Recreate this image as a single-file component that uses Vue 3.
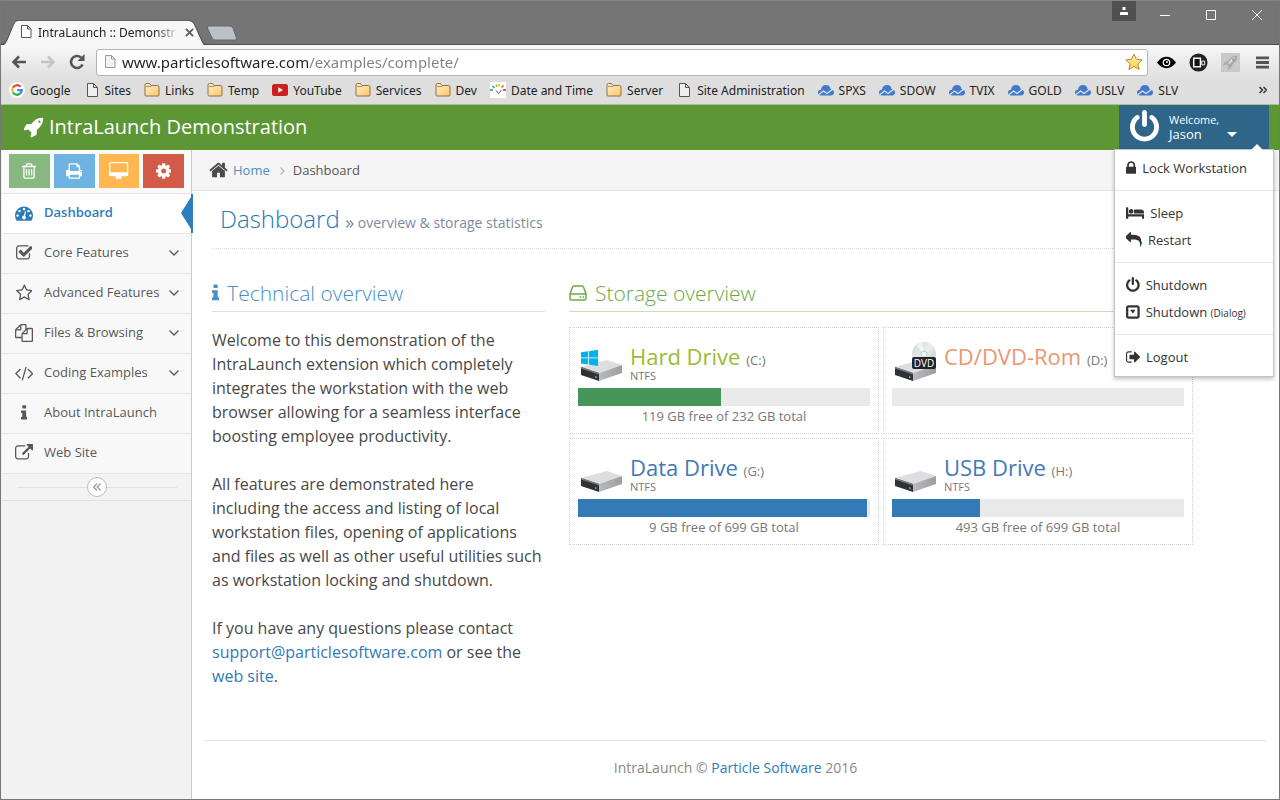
<script setup>
import { ref } from 'vue'

const url = ref('www.particlesoftware.com/examples/complete/')

const bookmarks = [
  { label: 'Google', icon: 'google' },
  { label: 'Sites', icon: 'page' },
  { label: 'Links', icon: 'folder' },
  { label: 'Temp', icon: 'folder' },
  { label: 'YouTube', icon: 'youtube' },
  { label: 'Services', icon: 'folder' },
  { label: 'Dev', icon: 'folder' },
  { label: 'Date and Time', icon: 'date' },
  { label: 'Server', icon: 'folder' },
  { label: 'Site Administration', icon: 'page' },
  { label: 'SPXS', icon: 'cloud' },
  { label: 'SDOW', icon: 'cloud' },
  { label: 'TVIX', icon: 'cloud' },
  { label: 'GOLD', icon: 'cloud' },
  { label: 'USLV', icon: 'cloud' },
  { label: 'SLV', icon: 'cloud' },
]

const icons = {
  trash: { box: '192 0 1408 1792', d: 'M704 736v576q0 14-9 23t-23 9h-64q-14 0-23-9t-9-23v-576q0-14 9-23t23-9h64q14 0 23 9t9 23zm256 0v576q0 14-9 23t-23 9h-64q-14 0-23-9t-9-23v-576q0-14 9-23t23-9h64q14 0 23 9t9 23zm256 0v576q0 14-9 23t-23 9h-64q-14 0-23-9t-9-23v-576q0-14 9-23t23-9h64q14 0 23 9t9 23zm128 724v-948h-896v948q0 22 7 40.5t14.5 27 10.5 8.5h832q3 0 10.5-8.5t14.5-27 7-40.5zm-672-1076h448l-48-117q-7-9-17-11h-317q-10 2-17 11zm928 32v64q0 14-9 23t-23 9h-96v948q0 83-47 143.5t-113 60.5h-832q-66 0-113-58.5t-47-141.5v-952h-96q-14 0-23-9t-9-23v-64q0-14 9-23t23-9h309l70-167q15-37 54-63t79-26h320q40 0 79 26t54 63l70 167h309q14 0 23 9t9 23z' },
  print: { box: '64 0 1664 1792', d: 'M448 1536h896v-256h-896v256zm0-640h896v-384h-160q-40 0-68-28t-28-68v-160h-640v640zm1152 64q0-26-19-45t-45-19-45 19-19 45 19 45 45 19 45-19 19-45zm128 0v416q0 13-9.5 22.5t-22.5 9.5h-224v160q0 40-28 68t-68 28h-960q-40 0-68-28t-28-68v-160h-224q-13 0-22.5-9.5t-9.5-22.5v-416q0-79 56.5-135.5t135.5-56.5h64v-544q0-40 28-68t68-28h672q40 0 88 20t76 48l152 152q28 28 48 76t20 88v256h64q79 0 135.5 56.5t56.5 135.5z' },
  desktop: { box: '-64 0 1920 1792', d: 'M1728 992v-832q0-13-9.5-22.5t-22.5-9.5h-1600q-13 0-22.5 9.5t-9.5 22.5v832q0 13 9.5 22.5t22.5 9.5h1600q13 0 22.5-9.5t9.5-22.5zm128-832v1088q0 66-47 113t-113 47h-544q0 37 16 77.5t32 71 16 43.5q0 26-19 45t-45 19h-512q-26 0-45-19t-19-45q0-14 16-44t32-70 16-78h-544q-66 0-113-47t-47-113v-1088q0-66 47-113t113-47h1600q66 0 113 47t47 113z' },
  cog: { box: '128 0 1536 1792', d: 'M1152 896q0-106-75-181t-181-75-181 75-75 181 75 181 181 75 181-75 75-181zm512-109v222q0 12-8 23t-20 13l-185 28q-19 54-39 91 35 50 107 138 10 12 10 25t-9 23q-27 37-99 108t-94 71q-12 0-26-9l-138-108q-44 23-91 38-16 136-29 186-7 28-36 28h-222q-14 0-24.5-8.5t-11.5-21.5l-28-184q-49-16-90-37l-141 107q-10 9-25 9-14 0-25-11-126-114-165-168-7-10-7-23 0-12 8-23 15-21 51-66.5t54-70.5q-27-50-41-99l-183-27q-13-2-21-12.5t-8-23.5v-222q0-12 8-23t19-13l186-28q14-46 39-92-40-57-107-138-10-12-10-24 0-10 9-23 26-36 98.5-107.5t94.5-71.5q13 0 26 10l138 107q44-23 91-38 16-136 29-186 7-28 36-28h222q14 0 24.5 8.5t11.5 21.5l28 184q49 16 90 37l142-107q9-9 24-9 13 0 25 10 129 119 165 170 7 8 7 22 0 12-8 23-15 21-51 66.5t-54 70.5q26 50 41 98l183 28q13 2 21 12.5t8 23.5z' },
  gauge: { box: '0 0 1792 1792', d: 'M384 1152q0-53-37.5-90.5t-90.5-37.5-90.5 37.5-37.5 90.5 37.5 90.5 90.5 37.5 90.5-37.5 37.5-90.5zm192-448q0-53-37.5-90.5t-90.5-37.5-90.5 37.5-37.5 90.5 37.5 90.5 90.5 37.5 90.5-37.5 37.5-90.5zm428 481l101-382q6-26-7.5-48.5t-38.5-29.5-48 6.5-30 39.5l-101 382q-60 5-107 43.5t-63 98.5q-20 77 20 146t117 89 146-20 89-117q16-60-6-117t-72-91zm660-33q0-53-37.5-90.5t-90.5-37.5-90.5 37.5-37.5 90.5 37.5 90.5 90.5 37.5 90.5-37.5 37.5-90.5zm-640-640q0-53-37.5-90.5t-90.5-37.5-90.5 37.5-37.5 90.5 37.5 90.5 90.5 37.5 90.5-37.5 37.5-90.5zm448 192q0-53-37.5-90.5t-90.5-37.5-90.5 37.5-37.5 90.5 37.5 90.5 90.5 37.5 90.5-37.5 37.5-90.5zm320 448q0 261-141 483-19 29-54 29h-1402q-35 0-54-29-141-221-141-483 0-182 71-348t191-286 286-191 348-71 348 71 286 191 191 286 71 348z' },
  check: { box: '64 0 1664 1792', d: 'M1472 930v318q0 119-84.5 203.5t-203.5 84.5h-832q-119 0-203.5-84.5t-84.5-203.5v-832q0-119 84.5-203.5t203.5-84.5h832q63 0 117 25 15 7 18 23 3 17-9 29l-49 49q-10 10-23 10-3 0-9-2-23-6-45-6h-832q-66 0-113 47t-47 113v832q0 66 47 113t113 47h832q66 0 113-47t47-113v-254q0-13 9-22l64-64q10-10 23-10 6 0 12 3 20 8 20 29zm231-489l-814 814q-24 24-57 24t-57-24l-430-430q-24-24-24-57t24-57l110-110q24-24 57-24t57 24l263 263 647-647q24-24 57-24t57 24l110 110q24 24 24 57t-24 57z' },
  star: { box: '64 0 1664 1792', d: 'M1201 1004l306-297-422-62-189-382-189 382-422 62 306 297-73 421 378-199 377 199zm527-357q0 22-26 48l-363 354 86 500q1 7 1 20 0 50-41 50-19 0-40-12l-449-236-449 236q-22 12-40 12-21 0-31.5-14.5t-10.5-35.5q0-6 2-20l86-500-364-354q-25-27-25-48 0-37 56-46l502-73 225-455q19-41 49-41t49 41l225 455 502 73q56 9 56 46z' },
  files: { box: '0 0 1792 1792', d: 'M1696 384q40 0 68 28t28 68v1216q0 40-28 68t-68 28h-960q-40 0-68-28t-28-68v-288h-544q-40 0-68-28t-28-68v-672q0-40 20-88t48-76l408-408q28-28 76-48t88-20h416q40 0 68 28t28 68v328q68-40 128-40h416zm-544 213l-299 299h299v-299zm-640-384l-299 299h299v-299zm196 647l316-316v-416h-384v416q0 40-28 68t-68 28h-416v640h512v-256q0-40 20-88t48-76zm956 804v-1152h-384v416q0 40-28 68t-68 28h-416v640h896z' },
  code: { box: '-20 0 1832 1792', d: 'M553 1399l-50 50q-10 10-23 10t-23-10l-466-466q-10-10-10-23t10-23l466-466q10-10 23-10t23 10l50 50q10 10 10 23t-10 23l-393 393 393 393q10 10 10 23t-10 23zm591-1067l-373 1291q-4 13-15.5 19.5t-23.5 2.5l-62-17q-13-4-19.5-15.5t-2.5-24.5l373-1291q4-13 15.5-19.5t23.5-2.5l62 17q13 4 19.5 15.5t2.5 24.5zm657 651l-466 466q-10 10-23 10t-23-10l-50-50q-10-10-10-23t10-23l393-393-393-393q-10-10-10-23t10-23l50-50q10-10 23-10t23 10l466 466q10 10 10 23t-10 23z' },
  info: { box: '576 0 640 1792', d: 'M1216 1344v128q0 26-19 45t-45 19h-512q-26 0-45-19t-19-45v-128q0-26 19-45t45-19h64v-384h-64q-26 0-45-19t-19-45v-128q0-26 19-45t45-19h384q26 0 45 19t19 45v576h64q26 0 45 19t19 45zm-128-1152v192q0 26-19 45t-45 19h-256q-26 0-45-19t-19-45v-192q0-26 19-45t45-19h256q26 0 45 19t19 45z' },
  external: { box: '0 0 1792 1792', d: 'M1408 928v320q0 119-84.5 203.5t-203.5 84.5h-832q-119 0-203.5-84.5t-84.5-203.5v-832q0-119 84.5-203.5t203.5-84.5h704q14 0 23 9t9 23v64q0 14-9 23t-23 9h-704q-66 0-113 47t-47 113v832q0 66 47 113t113 47h832q66 0 113-47t47-113v-320q0-14 9-23t23-9h64q14 0 23 9t9 23zm384-864v512q0 26-19 45t-45 19-45-19l-176-176-652 652q-10 10-23 10t-23-10l-114-114q-10-10-10-23t10-23l652-652-176-176q-19-19-19-45t19-45 45-19h512q26 0 45 19t19 45z' },
  rocket: { box: '64 0 1664 1792', d: 'M1440 448q0-40-28-68t-68-28-68 28-28 68 28 68 68 28 68-28 28-68zm224-288q0 249-75.5 430.5t-253.5 360.5q-81 80-195 176l-20 379q-2 16-16 26l-384 224q-7 4-16 4-12 0-23-9l-64-64q-13-14-8-32l85-276-281-281-276 85q-3 1-9 1-14 0-23-9l-64-64q-17-19-5-39l224-384q10-14 26-16l379-20q96-114 176-195 188-187 358-258t431-71q14 0 24 9.5t10 22.5z' },
  home: { box: '64 0 1664 1792', d: 'M1472 992v480q0 26-19 45t-45 19h-384v-384h-256v384h-384q-26 0-45-19t-19-45v-480q0-1 .5-3t.5-3l575-474 575 474q1 2 1 6zm223-69l-62 74q-8 9-21 11h-3q-13 0-21-7l-692-577-692 577q-12 8-24 7-13-2-21-11l-62-74q-8-10-7-23.5t11-21.5l719-599q32-26 76-26t76 26l244 204v-195q0-14 9-23t23-9h192q14 0 23 9t9 23v408l219 182q10 8 11 21.5t-7 23.5z' },
  power: { box: '128 0 1536 1792', d: 'M1664 896q0 156-61 298t-164 245-245 164-298 61-298-61-245-164-164-245-61-298q0-182 80.5-343t226.5-270q43-32 95.5-25t83.5 50q32 42 24.5 94.5t-49.5 84.5q-98 74-151.5 181t-53.5 228q0 104 40.5 198.5t109.5 163.5 163.5 109.5 198.5 40.5 198.5-40.5 163.5-109.5 109.5-163.5 40.5-198.5q0-121-53.5-228t-151.5-181q-42-32-49.5-84.5t24.5-94.5q31-43 84-50t95 25q146 109 226.5 270t80.5 343zm-640-768v640q0 52-38 90t-90 38-90-38-38-90v-640q0-52 38-90t90-38 90 38 38 90z' },
  lock: { box: '320 0 1152 1792', d: 'M640 768h512v-192q0-106-75-181t-181-75-181 75-75 181v192zm832 96v576q0 40-28 68t-68 28h-960q-40 0-68-28t-28-68v-576q0-40 28-68t68-28h32v-192q0-184 132-316t316-132 316 132 132 316v192h32q40 0 68 28t28 68z' },
  bed: { box: '0 0 2048 1792', d: 'M256 1024h1728q26 0 45 19t19 45v448h-256v-256h-1536v256h-256v-1216q0-26 19-45t45-19h128q26 0 45 19t19 45v704zm576-320q0 106-75 181t-181 75-181-75-75-181 75-181 181-75 181 75 75 181zm1216 256v-64q0-159-112.5-271.5t-271.5-112.5h-704q-26 0-45 19t-19 45v384h1152z' },
  reply: { box: '0 0 1792 1792', d: 'M1792 1120q0 166-127 451-3 7-10.5 24t-13.5 30-13 22q-12 17-28 17-15 0-23.5-10t-8.5-25q0-9 2.5-26.5t2.5-23.5q5-68 5-123 0-112-19.5-200.5t-54-153.5-89-112.5-119-78.5-149.5-49.5-174.5-24.5-200.5-7.5h-224v256q0 26-19 45t-45 19-45-19l-512-512q-19-19-19-45t19-45l512-512q19-19 45-19t45 19 19 45v256h224q713 0 875 403 53 134 53 333z' },
  dialog: { box: '128 0 1536 1792', d: 'M1145 676q17 32-4 61l-192 258q-20 29-53 29t-53-29l-192-258q-21-29-4-61 17-36 57-36h384q40 0 57 36zm263 700v-960q0-14-9-23t-23-9h-960q-14 0-23 9t-9 23v960q0 14 9 23t23 9h960q14 0 23-9t9-23zm256-960v960q0 119-84.5 203.5t-203.5 84.5h-960q-119 0-203.5-84.5t-84.5-203.5v-960q0-119 84.5-203.5t203.5-84.5h960q119 0 203.5 84.5t84.5 203.5z' },
  logout: { box: '64 0 1568 1792', d: 'M704 1440q0 4 1 20t.5 26.5-3 23.5-10 19.5-20.5 6.5h-320q-119 0-203.5-84.5t-84.5-203.5v-704q0-119 84.5-203.5t203.5-84.5h320q13 0 22.5 9.5t9.5 22.5q0 4 1 20t.5 26.5-3 23.5-10 19.5-20.5 6.5h-320q-66 0-113 47t-47 113v704q0 66 47 113t113 47h312l11.5 1 11.5 3 8 5.5 7 9 2 13.5zm928-544q0 26-19 45l-544 544q-19 19-45 19t-45-19-19-45v-288h-448q-26 0-45-19t-19-45v-384q0-26 19-45t45-19h448v-288q0-26 19-45t45-19 45 19l544 544q19 19 19 45z' },
}

const shortcuts = [
  { name: 'Trash', icon: 'trash', tone: 'green' },
  { name: 'Print', icon: 'print', tone: 'blue' },
  { name: 'Desktop', icon: 'desktop', tone: 'orange' },
  { name: 'Settings', icon: 'cog', tone: 'red' },
]

const nav = [
  { label: 'Dashboard', icon: 'gauge', active: true },
  { label: 'Core Features', icon: 'check', sub: true },
  { label: 'Advanced Features', icon: 'star', sub: true },
  { label: 'Files & Browsing', icon: 'files', sub: true },
  { label: 'Coding Examples', icon: 'code', sub: true },
  { label: 'About IntraLaunch', icon: 'info' },
  { label: 'Web Site', icon: 'external' },
]

const menuGroups = [
  [{ label: 'Lock Workstation', icon: 'lock' }],
  [{ label: 'Sleep', icon: 'bed' }, { label: 'Restart', icon: 'reply' }],
  [{ label: 'Shutdown', icon: 'power' }, { label: 'Shutdown', note: '(Dialog)', icon: 'dialog' }],
  [{ label: 'Logout', icon: 'logout' }],
]

const drives = [
  { name: 'Hard Drive', letter: '(C:)', fs: 'NTFS', used: 49, text: '119 GB free of 232 GB total', tone: 'lime', badge: 'windows' },
  { name: 'CD/DVD-Rom', letter: '(D:)', fs: '', used: 0, text: '', tone: 'coral', badge: 'dvd' },
  { name: 'Data Drive', letter: '(G:)', fs: 'NTFS', used: 99, text: '9 GB free of 699 GB total', tone: 'azure', badge: '' },
  { name: 'USB Drive', letter: '(H:)', fs: 'NTFS', used: 30, text: '493 GB free of 699 GB total', tone: 'azure', badge: '' },
]
</script>

<template>
  <div class="window">
    <svg class="defs" width="0" height="0" aria-hidden="true">
      <defs>
        <linearGradient id="folderFill" x1="0" y1="0" x2="1" y2="1">
          <stop offset="0" stop-color="#fff0cd" />
          <stop offset="1" stop-color="#f9c66c" />
        </linearGradient>
        <linearGradient id="starFill" x1="0" y1="0" x2="0" y2="1">
          <stop offset="0" stop-color="#fff3b0" />
          <stop offset="1" stop-color="#fbd03f" />
        </linearGradient>
        <linearGradient id="driveSide" x1="0" y1="0" x2="1" y2="0">
          <stop offset="0" stop-color="#b9babd" />
          <stop offset="1" stop-color="#9d9ea1" />
        </linearGradient>
        <linearGradient id="discFill" x1="0" y1="0" x2="1" y2="1">
          <stop offset="0" stop-color="#c9d8d4" />
          <stop offset="0.5" stop-color="#e9eeec" />
          <stop offset="1" stop-color="#b7c4c1" />
        </linearGradient>
      </defs>
    </svg>

    <div class="titlebar">
      <div class="tab">
        <svg class="tab-shape" viewBox="0 0 208 26" preserveAspectRatio="none" aria-hidden="true">
          <path d="M0 26C5 25 5 23 7 19L13 4Q14 1 18 1H191Q195 1 197 4L204 20Q206 25 208 26Z" fill="#f7f7f7" />
          <path d="M0 24C5 24 5 22 7 18L13 4Q14 0 18 0H191Q195 0 197 4L204 19Q206 24 208 24" fill="none" stroke="#4d4d4d" />
        </svg>
        <svg class="page-icon" viewBox="0 0 12 16" aria-hidden="true"><path d="M1.500 1.500h6l3.500 3.500v8.500h-9.500zM7.500 1.500V5H11" fill="#fff" stroke="#555" /></svg>
        <span class="tab-title">IntraLaunch :: Demonstr</span>
        <button class="tab-close" aria-label="Close tab">
          <svg viewBox="0 0 10 10"><path d="M1 1L9 9M9 1L1 9" stroke="#5a5a5a" stroke-width="2" /></svg>
        </button>
      </div>
      <button class="new-tab" aria-label="New tab">
        <svg viewBox="0 0 32 16"><path d="M3 1H24Q26 1 27 3L30.500 13Q31 15 29 15H9Q7 15 6 13L1.500 3Q1 1 3 1Z" fill="#bcc1c9" stroke="#686868" /></svg>
      </button>
      <div class="window-controls">
        <button class="profile" aria-label="Profile"><svg viewBox="0 0 8 8"><path d="M2.500 0h3v3h-3zM0 8V6q0-1 1-1h6q1 0 1 1v2z" fill="#fff" /></svg></button>
        <button aria-label="Minimize"><svg viewBox="0 0 10 10"><path d="M0 5.500H10" stroke="#fff" /></svg></button>
        <button aria-label="Maximize"><svg viewBox="0 0 10 10"><path d="M.5.5h9v9h-9z" fill="none" stroke="#fff" /></svg></button>
        <button aria-label="Close"><svg viewBox="0 0 10 10"><path d="M0 0L10 10M10 0L0 10" stroke="#fff" /></svg></button>
      </div>
    </div>

    <div class="chrome">
      <div class="toolbar">
        <button class="tool" aria-label="Back"><svg viewBox="0 0 16 16"><path d="M15 8H3M8 2.500L2.500 8L8 13.500" fill="none" stroke="#555" stroke-width="2.600" /></svg></button>
        <button class="tool" aria-label="Forward"><svg viewBox="0 0 16 16"><path d="M1 8H13M8 2.500L13.500 8L8 13.500" fill="none" stroke="#c4c4c4" stroke-width="2.600" /></svg></button>
        <button class="tool" aria-label="Reload"><svg viewBox="0 0 16 16"><path d="M13.500 10.500A6 6 0 1 1 12 3.500" fill="none" stroke="#555" stroke-width="2.600" /><path d="M15.500 0V7H8.500Z" fill="#555" /></svg></button>
        <label class="address">
          <svg class="page-icon" viewBox="0 0 12 16" aria-hidden="true"><path d="M1.500 1.500h6l3.500 3.500v8.500h-9.500zM7.500 1.500V5H11" fill="#f3f3f3" stroke="#999" /></svg>
          <input v-model="url" type="text" aria-label="Address" />
          <svg class="fav" viewBox="0 0 18 18" aria-hidden="true"><path d="M9 1l2.400 5.300 5.800.6-4.300 3.900 1.200 5.700L9 13.600l-5.100 2.900 1.200-5.700L.8 6.900l5.800-.6z" fill="url(#starFill)" stroke="#c08a3c" stroke-linejoin="round" /></svg>
        </label>
        <button class="tool" aria-label="Viewer"><svg viewBox="0 0 20 20"><path d="M0 10Q4.500 4 10 4T20 10Q15.500 16 10 16T0 10Z" fill="#000" /><circle cx="10" cy="10" r="4" fill="#fff" /><circle cx="10" cy="10" r="2.700" fill="#000" /><circle cx="10.500" cy="9.500" r="1" fill="#fff" /></svg></button>
        <button class="tool" aria-label="Recorder"><svg viewBox="0 0 20 20"><circle cx="10" cy="10" r="9.500" fill="#222" /><rect x="5" y="5.500" width="7" height="9" fill="#111" stroke="#fff" stroke-width="1.500" /><path d="M13.500 8.500h3v4h-3z" fill="none" stroke="#fff" /></svg></button>
        <button class="tool" aria-label="IntraLaunch"><svg viewBox="0 0 20 20"><rect width="20" height="20" fill="#c9c9c9" /><path d="M17 3Q11 3 8 8L4 10 2 13 6 12 8 14 7 18 10 16 12 12Q17 9 17 3Z" fill="#a9a9a9" /><path d="M15 4Q10 6 7 12Q13 10 15 4Z" fill="#dedede" /><circle cx="13" cy="7" r="1.300" fill="#999" /></svg></button>
        <button class="tool burger" aria-label="Menu"><svg viewBox="0 0 14 14"><path d="M0 2H14M0 7H14M0 12H14" stroke="#555" stroke-width="3" /></svg></button>
      </div>
      <nav class="bookmarks" aria-label="Bookmarks">
        <a v-for="b in bookmarks" :key="b.label" href="#">
          <svg v-if="b.icon === 'google'" viewBox="0 0 16 16"><circle cx="8" cy="8" r="8" fill="#fff" /><path d="M11.500 4.700A4.800 4.800 0 0 0 3.800 5.700" fill="none" stroke="#ea4335" stroke-width="2.200" /><path d="M3.800 5.700A4.800 4.800 0 0 0 3.900 10.500" fill="none" stroke="#fbbc05" stroke-width="2.200" /><path d="M3.900 10.500A4.800 4.800 0 0 0 11 11.700" fill="none" stroke="#34a853" stroke-width="2.200" /><path d="M11 11.700A4.800 4.800 0 0 0 12.800 8.100H8.200" fill="none" stroke="#4285f4" stroke-width="2.200" /></svg>
          <svg v-else-if="b.icon === 'page'" viewBox="0 0 16 16"><path d="M3.500 1.500h6l4 4v9h-10zM9.500 1.500v4h4" fill="#eee" stroke="#555" /></svg>
          <svg v-else-if="b.icon === 'folder'" viewBox="0 0 16 16"><path d="M1 13V3q0-1.500 1.500-1.500h3L7 3.500h6.500q1.500 0 1.500 1.500v8q0 1-1 1H2q-1 0-1-1z" fill="url(#folderFill)" stroke="#8f7140" /><path d="M2 4.500h5L8 3.500" fill="none" stroke="#b08c50" /></svg>
          <svg v-else-if="b.icon === 'youtube'" viewBox="0 0 16 16"><rect y="2" width="16" height="12" rx="2.500" fill="#cc1f1f" /><path d="M6.300 5.300v5.400L11 8z" fill="#fff" /></svg>
          <svg v-else-if="b.icon === 'date'" viewBox="0 0 16 16"><rect width="16" height="16" fill="#fff" /><path d="M6 8.500L8.500 11.500L11.500 8" fill="none" stroke="#556" /><g stroke-width="1.600"><path d="M0 8H3" stroke="#3f8fd0" /><path d="M2.500 4L4.500 6" stroke="#37a857" /><path d="M6.500 2.500V5" stroke="#7fc242" /><path d="M9 2V4.500" stroke="#f5b51e" /><path d="M13.500 3.500L11.500 5.500" stroke="#e8632b" /><path d="M16 8H13" stroke="#d52a5c" /></g></svg>
          <svg v-else viewBox="0 0 16 16"><path d="M3 13.500Q0 13 0 10.500Q0 8 3 7.800Q3.500 3 8 3Q12 3 12.500 7Q16 7.500 16 10.500Q16 13 13 13.500Z" fill="#4479c8" /><path d="M1 12.500L5.500 9L9 11.500L15 7" fill="none" stroke="#dce6f5" stroke-width="1.200" /></svg>
          <span>{{ b.label }}</span>
        </a>
        <button class="more" aria-label="More bookmarks"><svg viewBox="0 0 8 8"><path d="M.5 1L3.500 4L.5 7M4.500 1L7.500 4L4.500 7" fill="none" stroke="#333" stroke-width="1.500" /></svg></button>
      </nav>
    </div>

    <header class="navbar">
      <a class="brand" href="#">
        <svg :viewBox="icons.rocket.box" aria-hidden="true"><path :d="icons.rocket.d" fill="currentColor" /></svg>
        <span>IntraLaunch Demonstration</span>
      </a>
      <div class="user-area">
        <button class="user" aria-haspopup="true" aria-expanded="true">
          <svg class="user-icon" :viewBox="icons.power.box" aria-hidden="true"><path :d="icons.power.d" fill="#fff" /></svg>
          <span class="user-name"><small>Welcome,</small>Jason</span>
          <svg class="caret" viewBox="0 0 10 5" aria-hidden="true"><path d="M0 0H10L5 5Z" fill="#fff" /></svg>
        </button>
        <ul class="menu">
          <template v-for="(group, gi) in menuGroups" :key="gi">
            <li v-if="gi" class="divider" role="separator"></li>
            <li v-for="item in group" :key="item.icon">
              <a href="#">
                <svg :viewBox="icons[item.icon].box" aria-hidden="true"><path :d="icons[item.icon].d" fill="#333" /></svg>
                <span>{{ item.label }} <small v-if="item.note">{{ item.note }}</small></span>
              </a>
            </li>
          </template>
        </ul>
      </div>
    </header>

    <div class="body">
      <aside class="sidebar">
        <div class="shortcuts">
          <button v-for="s in shortcuts" :key="s.name" :class="s.tone" :aria-label="s.name">
            <svg :viewBox="icons[s.icon].box"><path :d="icons[s.icon].d" fill="#fff" /></svg>
          </button>
        </div>
        <nav aria-label="Main">
          <a v-for="n in nav" :key="n.label" href="#" class="nav-item" :class="{ active: n.active }">
            <span class="nav-icon"><svg :viewBox="icons[n.icon].box" aria-hidden="true"><path :d="icons[n.icon].d" fill="currentColor" /></svg></span>
            <span class="nav-label">{{ n.label }}</span>
            <svg v-if="n.sub" class="chevron" viewBox="0 0 10 6" aria-hidden="true"><path d="M.5.5L5 5L9.500.5" fill="none" stroke="#555" stroke-width="1.300" /></svg>
          </a>
        </nav>
        <div class="collapse">
          <button aria-label="Collapse sidebar"><svg viewBox="0 0 8 8"><path d="M4 .5L.7 4L4 7.500M7.500.5L4.200 4L7.500 7.500" fill="none" stroke="#999" stroke-width="1.200" /></svg></button>
        </div>
      </aside>

      <main class="main">
        <nav class="crumbs" aria-label="Breadcrumb">
          <svg class="home" :viewBox="icons.home.box" aria-hidden="true"><path :d="icons.home.d" fill="#4c4c4c" /></svg>
          <a href="#">Home</a>
          <svg class="sep" viewBox="0 0 5 8" aria-hidden="true"><path d="M.5.5L4 4L.5 7.500" fill="none" stroke="#b2b6bf" stroke-width="1.300" /></svg>
          <span>Dashboard</span>
        </nav>

        <div class="content">
          <div class="page-header">
            <h1>Dashboard</h1>
            <svg viewBox="0 0 8 8" aria-hidden="true"><path d="M.5.5L3.500 4L.5 7.500M4 .5L7 4L4 7.500" fill="none" stroke="#8089a0" stroke-width="1.300" /></svg>
            <span>overview &amp; storage statistics</span>
          </div>

          <div class="columns">
            <section class="overview">
              <h2 class="blue-head">
                <svg class="info" :viewBox="icons.info.box" aria-hidden="true"><path :d="icons.info.d" fill="#478fca" /></svg>
                Technical overview
              </h2>
              <p>Welcome to this demonstration of the IntraLaunch extension which completely integrates the workstation with the web browser allowing for a seamless interface boosting employee productivity.</p>
              <p>All features are demonstrated here including the access and listing of local workstation files, opening of applications and files as well as other useful utilities such as workstation locking and shutdown.</p>
              <p>If you have any questions please contact <a href="#">support@particlesoftware.com</a> or see the <a href="#">web site</a>.</p>
            </section>

            <section class="storage">
              <h2 class="green-head">
                <svg class="hdd" viewBox="0 0 18 16" aria-hidden="true"><path d="M1 9L3.500 2Q3.800 1 5 1H13Q14.200 1 14.500 2L17 9V13.500Q17 15 15.500 15H2.500Q1 15 1 13.500ZM1 9H17" fill="none" stroke="#69aa46" stroke-width="1.500" stroke-linejoin="round" /><path d="M10.500 11.200h1.500v1.500h-1.500zM13.500 11.200h1.500v1.500h-1.500z" fill="#69aa46" /></svg>
                Storage overview
              </h2>
              <div class="drives">
                <article v-for="d in drives" :key="d.letter" class="drive" :class="d.tone">
                  <div class="drive-head">
                    <svg class="drive-icon" viewBox="0 0 44 42" aria-hidden="true">
                      <path d="M1 27L27 20L42 25L19 33Z" fill="#dddee1" />
                      <path d="M1 27L19 33V41L1 35Z" fill="#303236" />
                      <path d="M1 27L19 33V34.500L1 28.500Z" fill="#777a7e" />
                      <path d="M19 33L42 25V33L19 41Z" fill="url(#driveSide)" />
                      <path d="M15 36l1.500.5v1.800L15 37.800z" fill="#37e04a" />
                      <g v-if="d.badge === 'windows'" fill="#00b2ec">
                        <path d="M1 12.300L8 11.300V17.500H1ZM8.800 11.200L18 9.700V17.500H8.800ZM1 18.300H8V24.500L1 23.500ZM8.800 18.300H18V26L8.800 24.600Z" />
                      </g>
                      <g v-if="d.badge === 'dvd'">
                        <circle cx="30" cy="14" r="12" fill="url(#discFill)" />
                        <path d="M30 14L22 5L28 2.200Z" fill="#fff" opacity=".6" />
                        <circle cx="30" cy="14" r="3" fill="#f6f8f8" stroke="#c3cccb" />
                        <rect x="18" y="17" width="24" height="12" rx="2" fill="#222427" />
                        <text x="30" y="27" class="dvd-text">DVD</text>
                      </g>
                    </svg>
                    <div>
                      <h3>{{ d.name }} <small>{{ d.letter }}</small></h3>
                      <div class="fs">{{ d.fs }}</div>
                    </div>
                  </div>
                  <div class="bar"><div class="fill" :style="{ width: d.used + '%' }"></div></div>
                  <div class="free">{{ d.text }}</div>
                </article>
              </div>
            </section>
          </div>
        </div>

        <footer class="footer">IntraLaunch © <a href="#">Particle Software</a> 2016</footer>
      </main>
    </div>
  </div>
</template>

<style>
body { margin: 0; }
</style>

<style scoped>
* { box-sizing: border-box; }
.window {
  display: flex;
  flex-direction: column;
  min-height: 100vh;
  border: 1px solid #777;
  border-top-color: #858585;
  font-family: "Open Sans", sans-serif;
  font-size: 13px;
  color: #484848;
  background: #fff;
}
.defs { position: absolute; }
svg { display: block; flex: none; }
a { color: #337ab7; text-decoration: none; }
button { border: 0; padding: 0; background: none; font: inherit; color: inherit; display: flex; align-items: center; justify-content: center; }
h1, h2, h3, p, ul { margin: 0; padding: 0; font-weight: 400; }

.titlebar {
  display: flex;
  align-items: flex-end;
  height: 44px;
  background: #757575;
  border-bottom: 1px solid #4d4d4d;
}
.tab {
  position: relative;
  display: flex;
  align-items: center;
  width: 204px;
  height: 24px;
  padding-left: 19px;
  font-family: "Noto Sans", sans-serif;
  font-size: 12px;
  color: #222;
}
.tab-shape { position: absolute; left: 0; top: 0; width: 204px; height: 26px; }
.tab .page-icon, .tab-title, .tab-close { position: relative; }
.page-icon { width: 12px; height: 16px; }
.tab-title {
  width: 138px;
  margin-left: 6px;
  white-space: nowrap;
  mask-image: linear-gradient(to right, #000 115px, transparent 144px);
}
.tab-close { margin-left: 9px; }
.tab-close svg { width: 9px; height: 9px; }
.new-tab { margin: 0 0 3px 1px; }
.new-tab svg { width: 32px; height: 16px; }
.window-controls { display: flex; align-self: flex-start; margin: 0 -1px 0 auto; }
.window-controls button { width: 46px; height: 28px; }
.window-controls svg { width: 10px; height: 10px; }
.window-controls .profile { width: 24px; height: 20px; margin-right: 6px; background: #505050; }
.window-controls .profile svg { width: 8px; height: 8px; }

.chrome { background: linear-gradient(#f8f8f8, #dedede 60%); border-bottom: 1px solid #a7c38e; }
.toolbar { display: flex; align-items: center; gap: 13px; height: 34px; padding: 0 10px; }
.tool svg { width: 16px; height: 16px; }
.tool:nth-child(n + 5) svg { width: 19px; height: 19px; }
.tool.burger { margin-left: 3px; }
.tool.burger svg { width: 13px; height: 13px; }
.address {
  display: flex;
  align-items: center;
  flex: 1;
  height: 27px;
  margin: 0 -4px 0 -2px;
  padding: 0 4px 0 7px;
  background: #fff;
  border: 1px solid #b5b5b5;
  border-radius: 3px;
}
.address input {
  flex: 1;
  min-width: 0;
  margin-left: 6px;
  padding: 0;
  border: 0;
  outline: 0;
  font-family: "Noto Sans", sans-serif;
  font-size: 15px;
  color: transparent;
  background: linear-gradient(to right, #222 186px, #808080 186px);
  background-clip: text;
}
.fav { width: 18px; height: 18px; }
.bookmarks {
  display: flex;
  align-items: center;
  gap: 13px;
  height: 25px;
  padding: 0 12px 3px 8px;
  font-family: "Noto Sans", sans-serif;
  font-size: 12px;
}
.bookmarks a { display: flex; align-items: center; gap: 5px; color: #222; white-space: nowrap; }
.bookmarks a svg { width: 16px; height: 16px; }
.more { margin-left: auto; }
.more svg { width: 8px; height: 8px; }

.navbar { display: flex; justify-content: space-between; height: 45px; padding: 0 10px 0 23px; background: #5c9635; }
.brand { display: flex; align-items: center; gap: 5px; padding-bottom: 2px; color: #fff; font-size: 20px; }
.brand svg { width: 20px; height: 22px; }
.user-area { position: relative; width: 150px; }
.user { width: 100%; height: 45px; padding: 0 0 2px 11px; justify-content: flex-start; background: #2e6589; color: #fff; text-align: left; }
.user-icon { width: 29px; height: 34px; }
.user-name { width: 54px; margin-left: 10px; line-height: 14px; }
.user-name small { display: block; font-size: 11px; }
.caret { width: 10px; height: 5px; margin: 16px 0 0 4px; }
.menu {
  position: absolute;
  z-index: 5;
  top: 44px;
  right: -5px;
  width: 160px;
  padding: 5px 0;
  list-style: none;
  background: #fff;
  border: 1px solid #c4c4c4;
  box-shadow: 0 2px 4px rgba(0, 0, 0, .25);
}
.menu::before {
  content: "";
  position: absolute;
  top: -6px;
  right: 10px;
  border: 6px solid transparent;
  border-top: 0;
  border-bottom-color: #fff;
}
.menu li a { display: flex; align-items: center; gap: 6px; height: 27px; padding: 0 11px 2px; color: #333; white-space: nowrap; }
.menu svg { height: 16px; }
.menu small { font-size: 10px; }
.menu .divider { height: 1px; margin: 8px 0 9px; background: #e5e5e5; }

.body { display: flex; flex: 1; }
.sidebar { width: 191px; flex: none; padding-left: 1px; background: #f2f2f2; border-right: 1px solid #ccc; }
.shortcuts { display: flex; gap: 4px; height: 44px; padding: 4px 7px 5px; background: #fafafa; border-bottom: 1px solid #e5e5e5; }
.shortcuts button { flex: 1; }
.shortcuts svg { height: 18px; }
.green { background: #87b87f; }
.blue { background: #6fb3e0; }
.orange { background: #ffb752; }
.red { background: #d15b47; }
.nav-item {
  position: relative;
  display: flex;
  align-items: center;
  height: 40px;
  padding: 0 12px 4px 7px;
  background: #f8f8f8;
  border-bottom: 1px solid #e5e5e5;
  color: #585858;
}
.nav-icon { display: flex; justify-content: center; width: 30px; margin-right: 5px; padding-top: 3px; }
.nav-icon svg { height: 18px; }
.nav-label { flex: 1; white-space: nowrap; }
.chevron { width: 10px; height: 6px; margin-top: 2px; }
.nav-item.active { background: #fff; color: #2b7dbc; font-weight: 600; }
.nav-item.active::before {
  content: "";
  position: absolute;
  right: 0;
  top: 3px;
  border: 16px solid transparent;
  border-right: 10px solid #2b7dbc;
  border-left: 0;
}
.nav-item.active::after { content: ""; position: absolute; right: -2px; top: 0; bottom: 0; width: 2px; background: #2b7dbc; }
.collapse {
  display: flex;
  align-items: center;
  justify-content: center;
  height: 27px;
  border-bottom: 1px solid #e0e0e0;
  background: linear-gradient(#e0e0e0, #e0e0e0) center / 160px 1px no-repeat #f3f3f3;
}
.collapse button { width: 20px; height: 20px; border: 1px solid #bbb; border-radius: 50%; background: #fff; }
.collapse svg { width: 8px; height: 8px; }

.main { display: flex; flex-direction: column; flex: 1; min-width: 0; }
.crumbs { display: flex; align-items: center; height: 41px; padding: 0 17px; background: #f5f5f5; border-bottom: 1px solid #e5e5e5; color: #555; }
.crumbs .home { width: 19px; height: 20px; margin-right: 5px; }
.crumbs a { color: #4c8fbd; }
.crumbs .sep { width: 5px; height: 8px; margin: 2px 8px 0 10px; }
.content { flex: 1; padding: 0 20px; }
.page-header { display: flex; align-items: baseline; height: 58px; padding: 10px 8px 0; border-bottom: 1px dotted #d8d8d8; color: #8089a0; }
.page-header h1 { font-size: 24px; font-weight: 300; line-height: 36px; color: #2679b5; }
.page-header svg { width: 8px; height: 8px; margin: 0 4px 0 6px; }
.page-header span { font-size: 14px; }
.columns { display: flex; gap: 24px; padding-top: 28px; }
.overview { flex: 1 1 333px; min-width: 0; font-size: 16px; line-height: 24px; }
.storage { flex: 2 1 690px; min-width: 0; }
h2 { display: flex; align-items: center; height: 35px; margin-bottom: 16px; padding-bottom: 3px; font-size: 21px; font-weight: 300; border-bottom: 1px solid #d5e3ef; }
.blue-head { color: #478fca; }
.green-head { margin-bottom: 15px; color: #69aa46; border-color: #c9dfbc; }
.info { height: 20px; margin-right: 8px; }
.hdd { width: 18px; height: 16px; margin-right: 8px; }
.overview p + p { margin-top: 24px; }
.drives { display: flex; flex-wrap: wrap; gap: 4px; }
.drive { width: 310px; height: 107px; padding: 12px 8px 0; border: 1px dotted #d0d0d0; }
.drive-head { display: flex; height: 48px; padding-left: 2px; }
.drive-icon { width: 44px; height: 42px; margin-right: 6px; }
.dvd-text { font: 10px "Open Sans", sans-serif; fill: #fff; text-anchor: middle; }
.drive h3 { padding-top: 3px; font-size: 22px; line-height: 26px; }
.drive h3 small { font-size: 13px; color: #777; }
.fs { font-size: 11px; line-height: 5px; color: #777; }
.bar { height: 18px; background: #e9e9e9; }
.fill { height: 100%; background: #337ab7; }
.free { font-size: 13px; line-height: 20px; text-align: center; color: #777; }
.lime h3 { color: #9abc32; }
.lime .fill { background: #459658; }
.coral h3 { color: #e79873; }
.azure h3 { color: #4179b9; }
.footer { margin: 0 12px; height: 59px; line-height: 54px; border-top: 1px solid #e5e5e5; text-align: center; font-size: 14px; color: #888; }
</style>
